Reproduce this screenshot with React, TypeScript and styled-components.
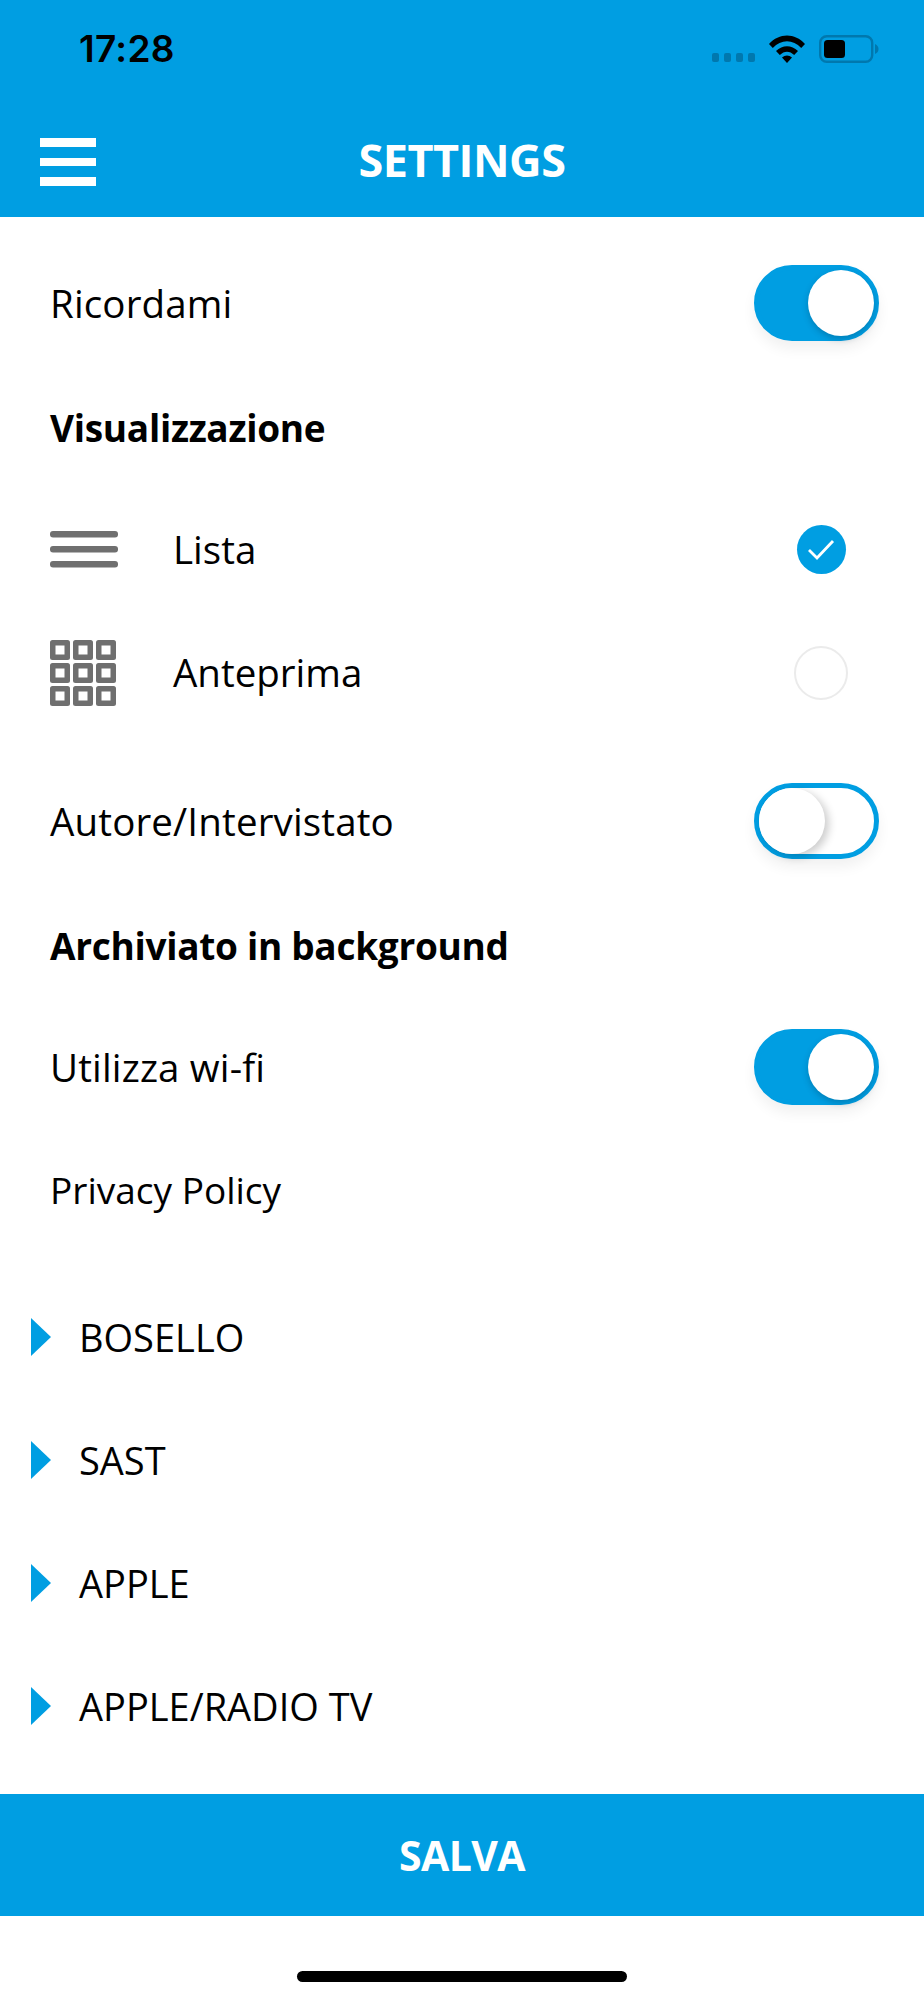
import styled, { createGlobalStyle } from 'styled-components';

const BLUE = '#009ee2';

const GlobalStyle = createGlobalStyle`
  html, body {
    margin: 0;
    padding: 0;
    background: #fff;
  }
  * {
    box-sizing: border-box;
  }
`;

const ACCOUNTS = ['BOSELLO', 'SAST', 'APPLE', 'APPLE/RADIO TV'];
const GRID_CELLS = [0, 23, 46];

const Toggle = ({ on }: { on: boolean }) => (
  <Settings.Toggle.Track $on={on}>
    <Settings.Toggle.Knob $on={on} />
  </Settings.Toggle.Track>
);

const SettingsView = () => {
  return (
    <Settings.Page>
      <GlobalStyle />
      <Settings.Header>
        <Settings.Status.Bar>
          <Settings.Status.Time>17:28</Settings.Status.Time>
          <Settings.Status.Icons>
            <Settings.Status.Dots>
              <i /><i /><i /><i />
            </Settings.Status.Dots>
            <svg width='38' height='29' viewBox='0 0 38 29'>
              <path d='M1 10C11-1.500 27-1.500 37 10l-3.800 4C25 5 13 5 4.800 14z' fill='#000' />
              <path d='M8 17c6.500-6.500 15.500-6.500 22 0l-3.800 4c-4.500-4.500-9.900-4.500-14.400 0z' fill='#000' />
              <path d='M14 23.500c3-2.800 7-2.800 10 0L19 29z' fill='#000' />
            </svg>
            <svg width='60' height='28' viewBox='0 0 60 28'>
              <rect x='1.200' y='1.200' width='52' height='25.600' rx='6.500' fill='none' stroke='#0078ae' strokeWidth='2.400' />
              <rect x='5' y='5' width='21' height='18' rx='3.500' fill='#000' />
              <path d='M56 9c2.500 1 3.500 3 3.500 5s-1 4-3.500 5z' fill='#0078ae' />
            </svg>
          </Settings.Status.Icons>
        </Settings.Status.Bar>
        <Settings.Nav.Bar>
          <Settings.Nav.Menu>
            <i /><i /><i />
          </Settings.Nav.Menu>
          <Settings.Nav.Title>SETTINGS</Settings.Nav.Title>
        </Settings.Nav.Bar>
      </Settings.Header>

      <Settings.Content>
        <Settings.Group $top={0}>
          <Settings.Row>
            <Settings.Label>Ricordami</Settings.Label>
            <Toggle on />
          </Settings.Row>
          <Settings.Row>
            <Settings.Heading>Visualizzazione</Settings.Heading>
          </Settings.Row>
          <Settings.Row>
            <Settings.Option.Icon>
              <svg width='68' height='37' viewBox='0 0 68 37'>
                <rect x='0' y='0' width='68' height='6.500' rx='3' fill='#6f6f6f' />
                <rect x='0' y='15' width='68' height='6.500' rx='3' fill='#6f6f6f' />
                <rect x='0' y='30' width='68' height='6.500' rx='3' fill='#6f6f6f' />
              </svg>
            </Settings.Option.Icon>
            <Settings.Option.Label>Lista</Settings.Option.Label>
            <Settings.Option.Mark>
              <Settings.Option.Checked>
                <svg width='30' height='24' viewBox='0 0 30 24'>
                  <path d='M3 13l8 8L27 4' fill='none' stroke='#fff' strokeWidth='2.800' />
                </svg>
              </Settings.Option.Checked>
            </Settings.Option.Mark>
          </Settings.Row>
          <Settings.Row>
            <Settings.Option.Icon>
              <svg width='66' height='66' viewBox='0 0 66 66'>
                {GRID_CELLS.map((y) =>
                  GRID_CELLS.map((x) => (
                    <g key={`${x}-${y}`}>
                      <rect x={x} y={y} width='20' height='20' rx='2.500' fill='#6f6f6f' />
                      <rect x={x + 5.500} y={y + 5.500} width='9' height='9' fill='#fff' />
                    </g>
                  ))
                )}
              </svg>
            </Settings.Option.Icon>
            <Settings.Option.Label>Anteprima</Settings.Option.Label>
            <Settings.Option.Mark>
              <Settings.Option.Empty />
            </Settings.Option.Mark>
          </Settings.Row>
        </Settings.Group>

        <Settings.Group $top={26}>
          <Settings.Row>
            <Settings.Label>Autore/Intervistato</Settings.Label>
            <Toggle on={false} />
          </Settings.Row>
          <Settings.Row>
            <Settings.Heading>Archiviato in background</Settings.Heading>
          </Settings.Row>
          <Settings.Row>
            <Settings.Label>Utilizza wi-fi</Settings.Label>
            <Toggle on />
          </Settings.Row>
          <Settings.Row>
            <Settings.Link>Privacy Policy</Settings.Link>
          </Settings.Row>
        </Settings.Group>

        <Settings.Group $top={24}>
          {ACCOUNTS.map((name) => (
            <Settings.Account.Row key={name}>
              <Settings.Account.Arrow />
              <Settings.Account.Name>{name}</Settings.Account.Name>
            </Settings.Account.Row>
          ))}
        </Settings.Group>
      </Settings.Content>

      <Settings.Save>SALVA</Settings.Save>
      <Settings.HomeArea>
        <Settings.HomeBar />
      </Settings.HomeArea>
    </Settings.Page>
  );
};

const Settings = {
  Page: styled.div`
    width: 924px;
    height: 2000px;
    display: flex;
    flex-direction: column;
    overflow: hidden;
    background: #fff;
    color: #000;
    font-family: 'Open Sans', 'Noto Sans', sans-serif;
  `,
  Header: styled.header`
    height: 217px;
    background: ${BLUE};
    display: flex;
    flex-direction: column;
  `,
  Status: {
    Bar: styled.div`
      height: 100px;
      padding: 26px 45px 0 79px;
      display: flex;
      align-items: flex-start;
      justify-content: space-between;
    `,
    Time: styled.span`
      font-family: Inter, 'Liberation Sans', sans-serif;
      font-size: 37px;
      font-weight: 600;
      line-height: 46px;
      letter-spacing: 0.3px;
    `,
    Icons: styled.div`
      display: flex;
      align-items: center;
      margin-top: 8px;
      gap: 13px;
      i {
        display: block;
      }
    `,
    Dots: styled.div`
      display: flex;
      gap: 5px;
      align-self: flex-end;
      margin-bottom: 1px;
      i {
        width: 7px;
        height: 9px;
        border-radius: 2px;
        background: #0078ae;
      }
    `,
  },
  Nav: {
    Bar: styled.div`
      flex: 1;
      position: relative;
      display: flex;
      align-items: flex-start;
      justify-content: center;
    `,
    Menu: styled.div`
      position: absolute;
      left: 40px;
      top: 38px;
      width: 56px;
      display: flex;
      flex-direction: column;
      gap: 11px;
      i {
        display: block;
        height: 8.500px;
        background: #fff;
      }
    `,
    Title: styled.h1`
      margin: 30px 0 0;
      color: #fff;
      font-size: 45px;
      font-weight: 700;
      line-height: 60px;
      letter-spacing: -0.5px;
    `,
  },
  Content: styled.main`
    flex: 1;
    padding-top: 24.500px;
    display: flex;
    flex-direction: column;
  `,
  Group: styled.section<{ $top: number }>`
    margin-top: ${({ $top }) => $top}px;
    display: flex;
    flex-direction: column;
  `,
  Row: styled.div`
    height: 123px;
    padding: 0 45px 0 50px;
    display: flex;
    align-items: center;
    justify-content: space-between;
  `,
  Label: styled.span`
    font-size: 38.500px;
    line-height: 50px;
    letter-spacing: 0.15px;
  `,
  Heading: styled.h2`
    margin: 3px 0 0;
    font-size: 37px;
    font-weight: 700;
    line-height: 50px;
    letter-spacing: -0.3px;
  `,
  Link: styled.a`
    font-size: 37px;
    line-height: 50px;
  `,
  Option: {
    Icon: styled.div`
      width: 123px;
      flex: none;
      display: flex;
      align-items: center;
      svg {
        display: block;
        margin-top: 1px;
      }
    `,
    Label: styled.span`
      flex: 1;
      font-size: 38.500px;
      line-height: 50px;
    `,
    Mark: styled.div`
      width: 54px;
      margin-right: 31px;
      display: flex;
      justify-content: center;
    `,
    Checked: styled.div`
      width: 49px;
      height: 49px;
      border-radius: 50%;
      background: ${BLUE};
      display: flex;
      align-items: center;
      justify-content: center;
    `,
    Empty: styled.div`
      width: 54px;
      height: 54px;
      margin-top: 1px;
      border-radius: 50%;
      border: 2px solid #ebebeb;
    `,
  },
  Toggle: {
    Track: styled.div<{ $on: boolean }>`
      position: relative;
      width: 125px;
      height: 76px;
      flex: none;
      border-radius: 38px;
      border: 5px solid ${BLUE};
      background: ${({ $on }) => ($on ? BLUE : '#fff')};
      box-shadow: 0 8px 14px rgba(0, 0, 0, 0.06);
    `,
    Knob: styled.div<{ $on: boolean }>`
      position: absolute;
      top: 0;
      ${({ $on }) => ($on ? 'right: 0;' : 'left: 0;')}
      width: 66px;
      height: 66px;
      border-radius: 50%;
      background: #fff;
      box-shadow: ${({ $on }) =>
        $on ? '0 3px 6px rgba(0, 60, 90, 0.3)' : '4px 3px 8px rgba(0, 0, 0, 0.2)'};
    `,
  },
  Account: {
    Row: styled.div`
      height: 123px;
      padding-left: 31px;
      display: flex;
      align-items: center;
      gap: 28px;
    `,
    Arrow: styled.span`
      width: 0;
      height: 0;
      border-top: 19px solid transparent;
      border-bottom: 19px solid transparent;
      border-left: 20px solid ${BLUE};
    `,
    Name: styled.span`
      font-size: 38px;
      line-height: 50px;
    `,
  },
  Save: styled.button`
    height: 122px;
    flex: none;
    border: 0;
    background: ${BLUE};
    color: #fff;
    font-family: inherit;
    font-size: 41px;
    font-weight: 700;
    letter-spacing: -0.6px;
  `,
  HomeArea: styled.div`
    height: 84px;
    flex: none;
    padding-top: 55px;
    display: flex;
    justify-content: center;
  `,
  HomeBar: styled.div`
    width: 330px;
    height: 11px;
    border-radius: 6px;
    background: #000;
  `,
};

export default SettingsView;
